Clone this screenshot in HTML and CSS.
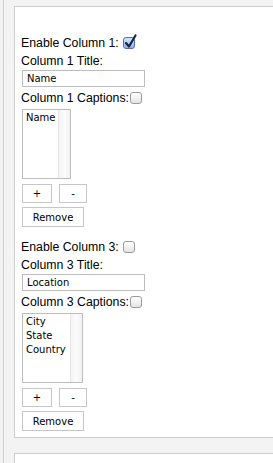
FILE: index.html
```
<!DOCTYPE html>
<html lang="en">
<head>
    <meta charset="UTF-8">
    <title>Columns</title>
    <link rel="stylesheet" href="styles.css">
</head>
<body>
    <div class="page">
        <div class="panel">
            <div class="column">
                <div class="line enable">Enable Column 1: <span class="check on"><svg viewBox="0 0 14 16" width="14" height="16"><path d="M3 9 L6 12.5 L12.5 1.5" fill="none" stroke="#16244f" stroke-width="2.2" stroke-linecap="round" stroke-linejoin="round"/></svg></span></div>
                <div class="line">Column 1 Title:</div>
                <input class="title" type="text" value="Name">
                <div class="line captions">Column 1 Captions:<span class="check"></span></div>
                <div class="listbox narrow">
                    <div class="items">
                        <div>Name</div>
                    </div>
                    <div class="scroll"></div>
                </div>
                <div class="pm">
                    <button class="btn plus">+</button>
                    <button class="btn minus">-</button>
                </div>
                <button class="btn remove">Remove</button>
            </div>
            <div class="column">
                <div class="line enable">Enable Column 3: <span class="check"></span></div>
                <div class="line">Column 3 Title:</div>
                <input class="title" type="text" value="Location">
                <div class="line captions">Column 3 Captions:<span class="check"></span></div>
                <div class="listbox wide">
                    <div class="items">
                        <div>City</div>
                        <div>State</div>
                        <div>Country</div>
                    </div>
                    <div class="scroll"></div>
                </div>
                <div class="pm">
                    <button class="btn plus">+</button>
                    <button class="btn minus">-</button>
                </div>
                <button class="btn remove">Remove</button>
            </div>
        </div>
        <div class="panel next"></div>
    </div>
</body>
</html>
```

FILE: styles.css
```
body {
    margin: 0;
    background: #f3f3f3;
    font-family: "Liberation Sans", Arial, sans-serif;
    font-size: 12.3px;
    color: #000;
    overflow: hidden;
}

.page {
    box-sizing: border-box;
    margin-left: 3px;
    border-left: 1px solid #d2d2d2;
    padding: 6px 0 0 10px;
    height: 463px;
}

/* White column panel */
.panel {
    background: #fff;
    border: 1px solid #cdcdcd;
    border-right: none;
    padding: 27px 0 6px 6px;
}

.panel.next {
    margin-top: 15px;
    height: 20px;
    padding: 0;
}

.column {
    margin-bottom: 11px;
}

.column:last-child {
    margin-bottom: 0;
}

.line {
    height: 18px;
    line-height: 18px;
    white-space: nowrap;
}

.line.enable {
    display: flex;
    align-items: center;
}

.line.captions {
    height: 22px;
    display: flex;
    align-items: center;
}

/* Mac style checkbox */
.check {
    position: relative;
    display: inline-block;
    width: 12px;
    height: 12px;
    box-sizing: border-box;
    border: 1px solid #9a9a9a;
    border-radius: 3px;
    background: linear-gradient(#ffffff, #e4e4e4);
    margin-left: 1px;
}

.line.enable .check {
    margin-left: 4px;
}

.check.on {
    border-color: #5a6f9c;
    background: linear-gradient(#d6e6fb, #8fb4e6);
}

.check svg {
    position: absolute;
    left: -1px;
    top: -4px;
}

.title {
    display: block;
    box-sizing: border-box;
    width: 123px;
    height: 17px;
    margin: 0 0 0 1px;
    padding: 0 4px;
    border: 1px solid #bdbdbd;
    font-family: "DejaVu Sans", sans-serif;
    font-size: 10px;
    color: #000;
    outline: none;
}

/* Caption list */
.listbox {
    display: flex;
    box-sizing: border-box;
    height: 70px;
    margin-left: 1px;
    border: 1px solid #bdbdbd;
    font-family: "DejaVu Sans", sans-serif;
    font-size: 10px;
}

.listbox.narrow {
    width: 49px;
}

.listbox.wide {
    width: 61px;
}

.items {
    flex: 1;
    padding: 1px 0 0 3px;
    line-height: 14px;
}

.scroll {
    width: 11px;
    border-left: 1px solid #e6e6e6;
    background: linear-gradient(to right, #f4f4f4, #fbfbfb, #f1f1f1);
}

.btn {
    box-sizing: border-box;
    height: 19px;
    padding: 0;
    border: 1px solid #c6c6c6;
    background: #fff;
    font-family: "DejaVu Sans", sans-serif;
    font-size: 10px;
    color: #000;
    border-radius: 0;
}

.pm {
    display: flex;
    gap: 7px;
    margin: 5px 0 0 1px;
}

.plus {
    width: 30px;
}

.minus {
    width: 28px;
}

.remove {
    display: block;
    width: 62px;
    height: 20px;
    margin: 4px 0 0 1px;
}
```
